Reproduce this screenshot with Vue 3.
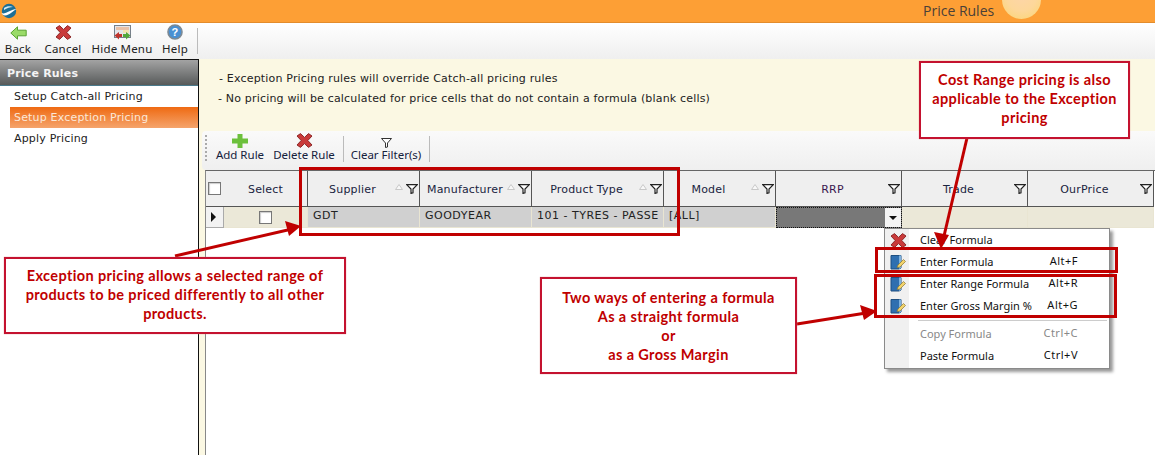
<script setup>
const columns = [
  { key: 'supplier', label: 'Supplier', sort: true, cls: 'pad-center' },
  { key: 'manufacturer', label: 'Manufacturer', sort: true, cls: 'pad-left' },
  { key: 'type', label: 'Product Type', sort: true, cls: 'pad-center' },
  { key: 'model', label: 'Model', sort: true, cls: 'pad-center' },
  { key: 'rrp', label: 'RRP', sort: false, cls: 'pad-small purple' },
  { key: 'trade', label: 'Trade', sort: false, cls: 'pad-small' },
  { key: 'our', label: 'OurPrice', sort: false, cls: 'pad-small' },
]
const menu = [
  { icon: 'x', label: 'Clear Formula', key: '' },
  { icon: 'book', label: 'Enter Formula', key: 'Alt+F' },
  { icon: 'book', label: 'Enter Range Formula', key: 'Alt+R' },
  { icon: 'book', label: 'Enter Gross Margin %', key: 'Alt+G', sep: true },
  { label: 'Copy Formula', key: 'Ctrl+C', disabled: true },
  { label: 'Paste Formula', key: 'Ctrl+V' },
]
const arrows = [
  { x1: 175, y1: 256, x2: 292, y2: 229, head: '301,226 285,221 289,236' },
  { x1: 797, y1: 324, x2: 866, y2: 313, head: '877,311 860,305 864,320' },
  { x1: 967, y1: 138, x2: 944, y2: 236, head: '941,249 934,232 949,235' },
]
const xPath = 'M1 3 4.500.6 8.500 4.400 12.500.6 16 3 11.800 7.500 16 12 12.500 14.400 8.500 10.600 4.500 14.400 1 12 5.200 7.500Z'
</script>

<template>
  <div class="page">
    <header class="titlebar">
      <svg class="logo" width="16" height="16" viewBox="0 0 16 16">
        <circle cx="8" cy="8" r="7.2" fill="#1d6f97" />
        <path d="M0.5 10 C4 12 10 6 15.5 6 C12 8 9 12 4 12.5 C2.5 12.5 1 11.5 0.5 10Z" fill="#fff" />
        <path d="M3 5 C6 2.5 10 3 12 4 C9 4 6 5 3 7Z" fill="#d5eaf3" />
      </svg>
      <div class="sun"></div>
      <span class="title">Price Rules</span>
    </header>

    <div class="toolbar">
      <button class="tool back">
        <svg width="17" height="14" viewBox="0 0 17 14"><path d="M.8 7 7.500.8v3.400h8.700v5.600H7.500v3.400Z" fill="#9adb68" stroke="#5aa332" /></svg>
        <span>Back</span>
      </button>
      <button class="tool cancel">
        <svg width="17" height="15" viewBox="0 0 17 15"><path :d="xPath" fill="#c93a3a" stroke="#8d2a2a" /></svg>
        <span>Cancel</span>
      </button>
      <button class="tool hide">
        <svg width="17" height="15" viewBox="0 0 17 15">
          <rect x="0.500" y="0.500" width="16" height="12" fill="#e4e6ea" stroke="#77808a" />
          <rect x="2" y="2" width="13" height="3" fill="#e9c1a8" />
          <rect x="9" y="5" width="6" height="3" fill="#f3e5b0" />
          <path d="M.5 10.500 5 7v2h3v3H5v2.500Z" fill="#c0352d" />
          <path d="M16.500 10.500 12 7v2H9v3h3v2.500Z" fill="#52a83a" />
        </svg>
        <span>Hide Menu</span>
      </button>
      <button class="tool help">
        <svg width="16" height="16" viewBox="0 0 16 16">
          <circle cx="8" cy="8" r="7" fill="#4a90d2" stroke="#7d8993" stroke-width="1.600" />
          <text x="8" y="12" text-anchor="middle" class="q">?</text>
        </svg>
        <span>Help</span>
      </button>
      <i class="tool-sep"></i>
    </div>

    <div class="body">
      <aside class="sidebar">
        <h2 class="side-head">Price Rules</h2>
        <a class="side-item">Setup Catch-all Pricing</a>
        <a class="side-item active">Setup Exception Pricing</a>
        <a class="side-item">Apply Pricing</a>
      </aside>

      <main class="main">
        <section class="note">
          <p>- Exception Pricing rules will override Catch-all pricing rules</p>
          <p>- No pricing will be calculated for price cells that do not contain a formula (blank cells)</p>
        </section>

        <div class="rule-bar">
          <i class="gripper"></i>
          <button class="rule-btn add">
            <svg width="16" height="14" viewBox="0 0 16 14"><path d="M5.500 0h5v4.500H16v5h-5.500V14h-5V9.500H0v-5h5.500Z" fill="#6cc03c" /></svg>
            <span>Add Rule</span>
          </button>
          <button class="rule-btn del">
            <svg width="17" height="15" viewBox="0 0 17 15"><path :d="xPath" fill="#c93a3a" stroke="#8d2a2a" /></svg>
            <span>Delete Rule</span>
          </button>
          <i class="bar-sep"></i>
          <button class="rule-btn clear">
            <svg width="11" height="10" viewBox="0 0 11 10"><path d="M.5.500h10L6.500 5v4l-2 .5V5Z" fill="#fff" stroke="#333" /></svg>
            <span>Clear Filter(s)</span>
          </button>
          <i class="bar-sep"></i>
        </div>

        <div class="grid">
          <div class="hcell h-check"><span class="check"></span></div>
          <div class="hcell h-select">Select</div>
          <div v-for="col in columns" :key="col.key" class="hcell" :class="col.cls">
            <span class="hlabel">{{ col.label }}</span>
            <svg v-if="col.sort" class="sort" width="8" height="6" viewBox="0 0 8 6"><path d="M4 .5 7.500 5.500H.5Z" fill="#f8f8f8" stroke="#c8c8c8" /></svg>
            <svg class="funnel" width="12" height="10" viewBox="0 0 12 10"><path d="M.7.700h10.600L7 5v3.800l-2 .6V5Z" fill="#fff" stroke="#222" stroke-width="1.200" /></svg>
          </div>

          <div class="cell indicator"><i class="tri"></i></div>
          <div class="cell sel-cell"><span class="check small"></span></div>
          <div class="cell grey">GDT</div>
          <div class="cell grey">GOODYEAR</div>
          <div class="cell grey">101 - TYRES - PASSE</div>
          <div class="cell grey">[ALL]</div>
          <div class="cell active-cell"><span class="drop"><i></i></span></div>
          <div class="cell cream"></div>
          <div class="cell cream"></div>
        </div>
      </main>
    </div>

    <ul class="menu">
      <li v-for="item in menu" :key="item.label" :class="{ disabled: item.disabled, sep: item.sep }">
        <span class="micon">
          <svg v-if="item.icon === 'x'" width="17" height="15" viewBox="0 0 17 15"><path :d="xPath" fill="#c93a3a" stroke="#8d2a2a" /></svg>
          <svg v-else-if="item.icon === 'book'" width="16" height="16" viewBox="0 0 16 16">
            <path d="M1 1.500h10v12.500l-2 1H1Z" fill="#2f6fb0" stroke="#1e4f80" />
            <path d="M9 1.500h2V14l-2 1Z" fill="#7db1de" />
            <path d="M7 13.500 8 11 13.500 5.500 15.500 7.500 10 13Z" fill="#f2d36b" stroke="#8a7530" stroke-width=".7" />
          </svg>
        </span>
        <span class="mlabel">{{ item.label }}</span>
        <span class="mkey">{{ item.key }}</span>
      </li>
    </ul>

    <div class="red r1"></div>
    <div class="red r2"></div>
    <div class="red r3"></div>

    <svg class="arrows" width="1155" height="455">
      <g v-for="a in arrows" :key="a.head">
        <line :x1="a.x1" :y1="a.y1" :x2="a.x2" :y2="a.y2" stroke="#c00000" stroke-width="3" />
        <polygon :points="a.head" fill="#c00000" />
      </g>
    </svg>

    <div class="callout c1">Exception pricing allows a selected range of products to be priced differently to all other products.</div>
    <div class="callout c2">Two ways of entering a formula<br />As a straight formula<br />or<br />as a Gross Margin</div>
    <div class="callout c3">Cost Range pricing is also applicable to the Exception pricing</div>
  </div>
</template>

<style>
html, body { margin: 0; background: #fff; overflow: hidden; }
</style>

<style scoped>
.page {
  position: relative;
  width: 1155px;
  height: 455px;
  overflow: hidden;
  display: flex;
  flex-direction: column;
  font-family: "DejaVu Sans", sans-serif;
  font-size: 11px;
  letter-spacing: .18px;
  color: #222;
  background: #fff;
}
button { border: 0; background: none; padding: 0; font: inherit; color: inherit; letter-spacing: 0; }
.titlebar {
  position: relative;
  height: 22px;
  flex: none;
  background: #fd9f35;
  border-bottom: 1px solid #e38c2c;
  overflow: hidden;
  display: flex;
  align-items: center;
  padding-left: 1px;
}
.logo { flex: none; }
.sun {
  position: absolute;
  left: 1002px;
  top: -20px;
  width: 39px;
  height: 39px;
  border-radius: 50%;
  background: radial-gradient(circle at 50% 40%, #fdd5a8 0%, #fdd79a 50%, #fbd67c 85%, #fdc35c 100%);
}
.title {
  position: absolute;
  left: 923px;
  top: 1px;
  font: 14px/20px "Open Sans", sans-serif;
  letter-spacing: 0;
  color: #4a4038;
}
.toolbar {
  height: 36px;
  flex: none;
  display: flex;
  align-items: stretch;
  background: linear-gradient(#fff, #efefef);
}
.tool {
  display: flex;
  flex-direction: column;
  align-items: center;
  justify-content: flex-end;
  font-size: 11.500px;
  font-family: "Noto Sans", sans-serif;
  letter-spacing: .2px;
  line-height: 15px;
  padding-bottom: 3px;
  gap: 1px;
}
.back { width: 36px; }
.cancel { width: 50px; margin-left: 2px; }
.hide { width: 64px; margin-left: 2px; }
.help { width: 30px; margin-left: 6px; }
.q { font: bold 11px "Liberation Sans", sans-serif; fill: #fff; }
.tool-sep { width: 1px; height: 26px; margin: 5px 0 0 7px; background: #bbb; }
.body { flex: 1; display: flex; min-height: 0; }
.sidebar {
  width: 198px;
  flex: none;
  border-top: 1px solid #111;
  border-right: 1px solid #111;
  background: #fff;
}
.side-head {
  margin: 0;
  height: 26px;
  padding-left: 7px;
  font-size: 11px;
  font-weight: bold;
  line-height: 27px;
  color: #f4f4f4;
  background: linear-gradient(#a3a3a3, #575a5a);
  border-bottom: 1px solid #4a7a8c;
  box-sizing: border-box;
}
.side-item {
  display: block;
  height: 21px;
  line-height: 21px;
  padding-left: 14px;
}
.side-item.active {
  margin-left: 10px;
  padding-left: 4px;
  color: #fbe8d8;
  background: linear-gradient(#ef6a12, #f5a46c);
}
.main {
  flex: 1;
  min-width: 0;
  background: #fbf8e3;
  display: flex;
  flex-direction: column;
}
.note {
  height: 72px;
  flex: none;
  padding: 10px 0 0 19px;
  box-sizing: border-box;
  background: #fbf8e3;
  line-height: 20px;
}
.note p { margin: 0; }
.note p:first-child { padding-left: 1px; }
.rule-bar {
  height: 39px;
  flex: none;
  margin-left: 3px;
  display: flex;
  align-items: flex-start;
  background: linear-gradient(#fafafa, #efefef);
  border-radius: 4px 0 0 4px;
  padding-left: 3px;
  box-sizing: border-box;
}
.gripper {
  width: 2px;
  height: 26px;
  margin: 4px 0 0 0;
  background: repeating-linear-gradient(#aaa 0 2px, transparent 2px 4px);
}
.rule-btn {
  display: flex;
  flex-direction: column;
  align-items: center;
  justify-content: flex-end;
  height: 34px;
  font-family: "Noto Sans", sans-serif;
  font-size: 11.500px;
  color: #14213c;
  line-height: 15px;
  padding-bottom: 3px;
  box-sizing: border-box;
}
.rule-btn svg { margin-bottom: -1px; }
.add { width: 52px; margin-left: 7px; }
.del { width: 64px; margin-left: 6px; }
.clear { width: 78px; margin-left: 3px; }
.bar-sep { width: 1px; height: 26px; margin: 5px 0 0 7px; background: #bbb; }
.clear + .bar-sep { margin-left: 4px; }
.grid {
  display: grid;
  flex: 1;
  grid-template-columns: 18px 84px 112px 112px 132px 112px 126px 126px 126px;
  grid-template-rows: 36px 21px;
  margin-left: 6px;
  border-top: 1px solid #666;
  border-left: 1px solid #888;
  background: #fff;
  align-content: start;
}
.hcell {
  position: relative;
  display: flex;
  align-items: center;
  background: #efefef;
  border-right: 1px solid #555;
  border-bottom: 1px solid #555;
  box-sizing: border-box;
  padding-top: 1px;
}
.h-check { border-right: 0; padding: 0 0 1px 2px; }
.h-select { justify-content: center; color: #1a2440; }
.pad-center { justify-content: center; padding-right: 22px; }
.pad-small { justify-content: center; padding-right: 12px; }
.pad-left { padding-left: 7px; }
.purple .hlabel { color: #3a1750; }
.hlabel { color: #1a2440; }
.sort { position: absolute; right: 16px; top: 13px; }
.funnel { position: absolute; right: 1px; top: 13px; }
.check {
  display: block;
  width: 11px;
  height: 11px;
  background: #fff;
  border: 1px solid #777;
  box-shadow: inset 1px 1px 1px #ccc;
}
.check.small { margin: 0 auto; }
.cell {
  box-sizing: border-box;
  display: flex;
  align-items: center;
  padding: 0 0 3px 5px;
  border-right: 1px solid #e9e5d2;
  border-bottom: 1px solid #e9e5d2;
  letter-spacing: .5px;
  white-space: nowrap;
  overflow: hidden;
}
.indicator { background: #f2f2f2; border-color: #aaa; padding: 0 0 0 5px; }
.tri { width: 0; height: 0; border-left: 5px solid #111; border-top: 5px solid transparent; border-bottom: 5px solid transparent; }
.sel-cell { background: #ebe8d8; padding: 0; }
.grey { background: #d0d0d0; }
.cream { background: #ebe8d8; }
.active-cell {
  background: #787878;
  border: 1px dotted #111;
  padding: 0;
  position: relative;
}
.drop {
  position: absolute;
  right: 0;
  top: 0;
  bottom: 0;
  width: 16px;
  background: #f4f4f4;
  display: flex;
  align-items: center;
  justify-content: center;
}
.drop i { width: 0; height: 0; border-top: 4px solid #111; border-left: 4px solid transparent; border-right: 4px solid transparent; }
.menu {
  position: absolute;
  left: 884px;
  top: 228px;
  width: 226px;
  height: 141px;
  box-sizing: border-box;
  margin: 0;
  padding: 0 1px;
  list-style: none;
  background: linear-gradient(90deg, #f0f0f0 0 24px, #fff 24px);
  border: 1px solid #8a8a8a;
  box-shadow: 3px 3px 3px #999;
  font-family: "Noto Sans", sans-serif;
  font-size: 11px;
  letter-spacing: 0;
  color: #111;
}
.menu li {
  position: relative;
  height: 22px;
  display: flex;
  align-items: center;
}
.menu li.sep { margin-bottom: 6px; }
.menu li.sep::after {
  content: "";
  position: absolute;
  left: 32px;
  right: 1px;
  bottom: -4px;
  height: 1px;
  background: #ccc;
}
.menu li.disabled { color: #888; }
.micon { width: 24px; display: flex; justify-content: center; flex: none; }
.mlabel { margin-left: 10px; flex: 1; padding-bottom: 2px; }
.mkey { position: absolute; right: 30px; top: 2px; letter-spacing: .5px; }
.red { position: absolute; border: 3px solid #c00000; box-sizing: border-box; }
.r1 { left: 299px; top: 167px; width: 381px; height: 69px; }
.r2 { left: 875px; top: 247px; width: 243px; height: 26px; }
.r3 { left: 874px; top: 274px; width: 243px; height: 44px; }
.arrows { position: absolute; left: 0; top: 0; pointer-events: none; }
.callout {
  position: absolute;
  box-sizing: border-box;
  background: #fff;
  border: 2px solid #c4122f;
  box-shadow: 0 0 1px #d88;
  color: #c00000;
  font-family: Lato, sans-serif;
  font-weight: 700;
  font-size: 14.500px;
  letter-spacing: .37px;
  line-height: 19px;
  text-align: center;
  display: flex;
  align-items: center;
  justify-content: center;
}
.c1 { left: 4px; top: 257px; width: 342px; height: 77px; padding: 0 12px 2px; }
.c2 { left: 540px; top: 277px; width: 257px; height: 97px; display: block; padding-top: 9px; }
.c3 { left: 919px; top: 61px; width: 211px; height: 78px; padding: 0 8px 4px; }
</style>
